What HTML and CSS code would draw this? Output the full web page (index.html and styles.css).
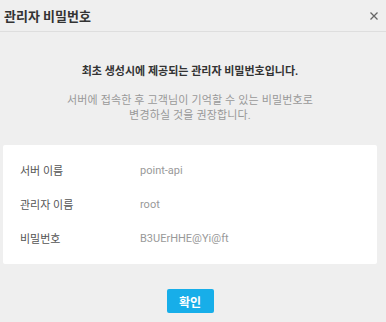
FILE: index.html
```html
<!DOCTYPE html>
<html lang="ko">
<head>
    <meta charset="UTF-8">
    <title>관리자 비밀번호</title>
    <link rel="stylesheet" href="styles.css">
</head>
<body>
    <div class="modal-header">
        <h1 class="modal-title">관리자 비밀번호</h1>
        <button class="close-btn" type="button" aria-label="닫기">
            <svg width="8" height="8" viewBox="0 0 8 8"><path d="M0.5 0.5 L7.5 7.5 M7.5 0.5 L0.5 7.5" stroke="#666" stroke-width="1.3" fill="none"/></svg>
        </button>
    </div>
    <div class="modal-body">
        <p class="notice">최초 생성시에 제공되는 관리자 비밀번호입니다.</p>
        <p class="desc">서버에 접속한 후 고객님이 기억할 수 있는 비밀번호로<br>변경하실 것을 권장합니다.</p>
        <div class="info-card">
            <div class="info-row">
                <span class="info-label">서버 이름</span>
                <span class="info-value">point-api</span>
            </div>
            <div class="info-row">
                <span class="info-label">관리자 이름</span>
                <span class="info-value">root</span>
            </div>
            <div class="info-row">
                <span class="info-label">비밀번호</span>
                <span class="info-value">B3UErHHE@Yi@ft</span>
            </div>
        </div>
        <div class="actions">
            <button class="confirm-btn" type="button">확인</button>
        </div>
    </div>
</body>
</html>
```
FILE: styles.css
```css
body {
    margin: 0;
    background-color: #efefef;
    font-family: Roboto, "Noto Sans CJK KR", sans-serif;
    color: #333;
}
.modal-header {
    display: flex;
    align-items: center;
    justify-content: space-between;
    height: 31px;
    padding: 0 8px 0 4px;
    border-bottom: 1px solid #dedede;
}
.modal-title {
    margin: 0;
    font-size: 13px;
    font-weight: bold;
    color: #333;
}
.close-btn {
    display: flex;
    background: none;
    border: none;
    padding: 0;
    margin-top: 1px;
    cursor: pointer;
}
.modal-body {
    padding: 32px 9px 0 3px;
}
.notice {
    margin: 0;
    text-align: center;
    font-size: 11px;
    line-height: 16px;
    font-weight: bold;
    color: #333;
}
.desc {
    margin: 13px 0 0;
    text-align: center;
    font-size: 11px;
    line-height: 15px;
    letter-spacing: 0.15px;
    color: #999;
}
.info-card {
    margin-top: 22px;
    background: #fff;
    border-radius: 2px;
    padding: 8px 0 9px;
}
.info-row {
    display: flex;
    align-items: center;
    height: 34px;
    padding-left: 17px;
    font-size: 11px;
}
.info-label {
    width: 120px;
    color: #555;
}
.info-value {
    color: #999;
}
.actions {
    display: flex;
    justify-content: center;
    margin-top: 25px;
}
.confirm-btn {
    width: 47px;
    height: 24px;
    border: none;
    border-radius: 2px;
    background-color: #17aee9;
    color: #fff;
    font-family: Roboto, "Noto Sans CJK KR", sans-serif;
    font-size: 12px;
    font-weight: bold;
    padding: 0;
    cursor: pointer;
}
```
